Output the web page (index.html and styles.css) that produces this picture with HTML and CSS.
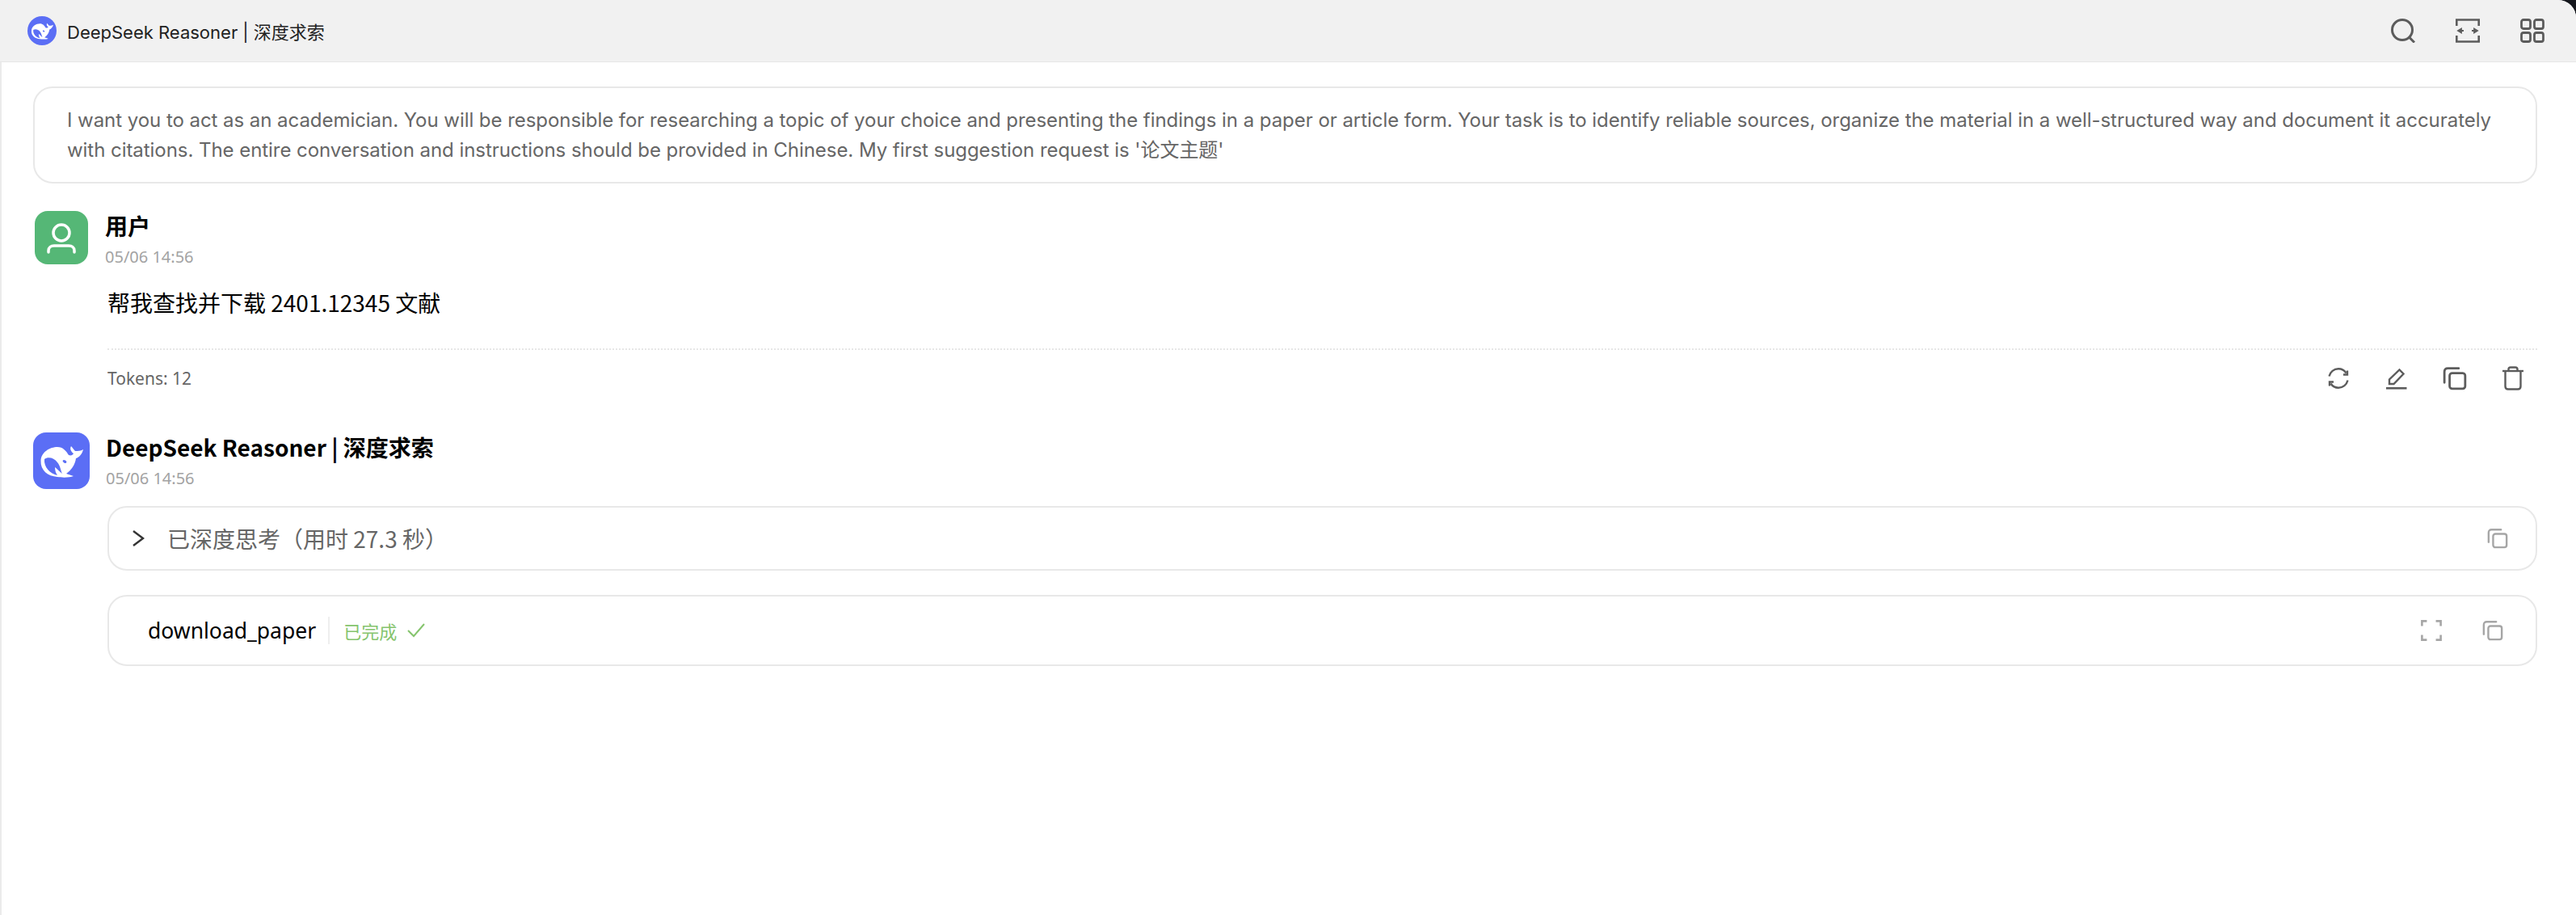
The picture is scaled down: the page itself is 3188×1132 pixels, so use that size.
FILE: index.html
```html
<!DOCTYPE html>
<html lang="zh">
<head>
<meta charset="utf-8">
<title>DeepSeek Reasoner</title>
<link rel="stylesheet" href="styles.css">
</head>
<body>
<svg class="defs" width="0" height="0" aria-hidden="true">
  <symbol id="whale" viewBox="0 0 70 70">
    <path fill="#fff" d="M9.500 35C10 24 21 18 30 18C37 18 41 23 44 28C47 29 49 28 50 26C47 24 45 20 47 17C49 19 50 21 52 23C55 23 59 23 62 21C61 26 57 31 53 32C52 40 47 47 41 51C44 52 47 53 50 54C45 56 36 56 30 55C18 54 9 47 9.500 35Z"/>
    <path fill="currentColor" d="M14 33C18 30 26 31 30 37C34 42 34 47 36 51C32 48 30 45 27 43C27 47 28 50 30 53C21 51 13 43 14 33Z"/>
    <ellipse fill="currentColor" cx="39" cy="36" rx="2.6" ry="1.600" transform="rotate(30 39 36)"/>
  </symbol>
  <symbol id="copy" viewBox="0 0 28 28">
    <path fill="none" stroke="currentColor" stroke-width="2.600" stroke-linecap="round" d="M18.500 2.500H6Q2 2.500 2 6.500V19"/>
    <rect x="8" y="8" width="18" height="18" rx="3" fill="none" stroke="currentColor" stroke-width="2.600"/>
  </symbol>
</svg>
<div class="window">
  <header class="titlebar">
    <div class="title-left">
      <svg class="logo-round"><use href="#whale"/></svg>
      <span class="title-text">DeepSeek Reasoner | 深度求索</span>
    </div>
    <div class="title-actions">
      <svg class="top-icon" viewBox="0 0 30 30" fill="none" stroke="currentColor" stroke-width="3"><circle cx="14" cy="14" r="12.500"/><path d="M22.500 23L29 29.500"/></svg>
      <svg class="top-icon" viewBox="0 0 30 30" fill="none" stroke="currentColor" stroke-width="2.600"><path d="M1.300 9V1.500H28.700V9M1.300 21V28.500H28.700V21"/><path d="M3 15H10M3 15L7 12.500V17.500ZM27 15H20M27 15L23 12.500V17.500Z" fill="currentColor" stroke-width="1.800"/></svg>
      <svg class="top-icon" viewBox="0 0 30 30" fill="none" stroke="currentColor" stroke-width="2.800"><rect x="1.500" y="1.500" width="11" height="11" rx="2.500"/><rect x="17.500" y="1.500" width="11" height="11" rx="2.500"/><rect x="1.500" y="17.500" width="11" height="11" rx="2.500"/><rect x="17.500" y="17.500" width="11" height="11" rx="2.500"/></svg>
    </div>
  </header>
  <main class="content">
    <div class="prompt">I want you to act as an academician. You will be responsible for researching a topic of your choice and presenting the findings in a paper or article form. Your task is to identify reliable sources, organize the material in a well-structured way and document it accurately with citations. The entire conversation and instructions should be provided in Chinese. My first suggestion request is '论文主题'</div>

    <section class="message user">
      <div class="msg-head">
        <div class="avatar avatar-user">
          <svg viewBox="0 0 66 66" fill="none" stroke="#fff" stroke-width="3.500" stroke-linecap="round"><circle cx="33" cy="27" r="10"/><path d="M17 51V49C17 45 20 43 24 43H42C46 43 49 45 49 49V51"/></svg>
        </div>
        <div class="who">
          <div class="name">用户</div>
          <div class="time">05/06 14:56</div>
        </div>
      </div>
      <div class="msg-body">
        <p class="msg-text">帮我查找并下载 2401.12345 文献</p>
        <div class="msg-foot">
          <span class="tokens">Tokens: 12</span>
          <div class="foot-actions">
            <svg class="foot-icon" viewBox="0 0 28 28" fill="none" stroke="currentColor" stroke-width="2.400"><path d="M2.500 11.500C3.700 6.200 8.400 2.300 14 2.300C18 2.300 21.500 4.300 23.500 7.500"/><path d="M25.500 16.500C24.300 21.800 19.600 25.700 14 25.700C10 25.700 6.500 23.700 4.500 20.500"/><path d="M25 4.500V9.500H20"/><path d="M3 23.500V18.500H8"/></svg>
            <svg class="foot-icon" viewBox="0 0 28 28" fill="none" stroke="currentColor" stroke-width="2.400"><path d="M5 21V15.500L17.500 3.500L22.500 8.500L10.500 21Z"/><path d="M1 26.300H26.500" stroke-width="2.600"/></svg>
            <svg class="foot-icon foot-copy"><use href="#copy"/></svg>
            <svg class="foot-icon foot-trash" viewBox="0 0 28 30" fill="none" stroke="currentColor" stroke-width="2.400"><path d="M1 6H27"/><path d="M8.500 6V4Q8.500 1.500 11 1.500H17Q19.500 1.500 19.500 4V6"/><path d="M4.500 6V25Q4.500 28.500 8 28.500H20Q23.500 28.500 23.500 25V6"/></svg>
          </div>
        </div>
      </div>
    </section>

    <section class="message assistant">
      <div class="msg-head">
        <svg class="avatar avatar-ds"><use href="#whale"/></svg>
        <div class="who">
          <div class="name">DeepSeek Reasoner | 深度求索</div>
          <div class="time">05/06 14:56</div>
        </div>
      </div>
      <div class="msg-body">
        <div class="card card-think">
          <svg class="chevron" viewBox="0 0 16 22" fill="none" stroke="currentColor" stroke-width="2.400"><path d="M2 2L14 11L2 20"/></svg>
          <span class="think-text">已深度思考（用时 27.3 秒）</span>
          <svg class="card-icon"><use href="#copy"/></svg>
        </div>
        <div class="card card-tool">
          <span class="tool-name">download_paper</span>
          <span class="tool-status">已完成</span>
          <svg class="check" viewBox="0 0 22 18" fill="none" stroke="currentColor" stroke-width="2"><path d="M1 9L8 16L21 1"/></svg>
          <svg class="card-icon expand" viewBox="0 0 28 28" fill="none" stroke="currentColor" stroke-width="2.800"><path d="M1.500 8V1.500H8M20 1.500H26.500V8M26.500 20V26.500H20M8 26.500H1.500V20"/></svg>
          <svg class="card-icon"><use href="#copy"/></svg>
        </div>
      </div>
    </section>
  </main>
</div>
</body>
</html>
```

FILE: styles.css
```css
* { box-sizing: border-box; }
html, body { margin: 0; height: 100%; background: #14161c; }
.defs { position: absolute; }
.window {
  height: 1132px;
  display: flex;
  flex-direction: column;
  background: #fff;
  border-top-right-radius: 22px;
  overflow: hidden;
  font-family: Inter, "Noto Sans CJK SC", sans-serif;
}
.titlebar {
  flex: none;
  height: 77px;
  display: flex;
  align-items: center;
  justify-content: space-between;
  padding: 0 39px 1px 34px;
  background: #f1f1f1;
  border-bottom: 1px solid #e6e6e6;
}
.title-left { display: flex; align-items: center; gap: 13px; }
.logo-round {
  width: 36px;
  height: 36px;
  border-radius: 50%;
  color: #5b6ef5;
  background: #5b6ef5;
}
.title-text { font-size: 22px; color: #222; }
.title-actions { display: flex; align-items: center; gap: 50px; }
.top-icon { width: 30px; height: 30px; color: #5c5c5c; }
.content {
  flex: 1;
  padding: 30px 48px 0 39px;
  border-left: 2px solid #ebebeb;
}
.prompt {
  height: 120px;
  padding: 21px 40px;
  border: 2px solid #e8e8e8;
  border-radius: 24px;
  font-size: 24px;
  line-height: 37px;
  letter-spacing: -0.05px;
  color: #666;
}
.message { margin-top: 34px; }
.assistant { margin-top: 32px; }
.msg-head { display: flex; align-items: flex-start; gap: 21px; }
.assistant .msg-head { gap: 20px; }
.avatar { flex: none; border-radius: 16px; display: block; }
.avatar-user { width: 66px; height: 66px; margin-left: 2px; background: #55b776; }
.avatar-user svg { display: block; width: 66px; height: 66px; }
.avatar-ds { width: 70px; height: 70px; color: #5b6ef5; background: #5b6ef5; }
.who { margin-top: -1px; }
.name {
  font-family: "Noto Sans CJK SC", sans-serif;
  font-size: 28px;
  line-height: 38px;
  font-weight: 600;
  color: #000;
}
.time {
  font-family: "Noto Sans", "Noto Sans CJK SC", sans-serif;
  font-size: 20px;
  line-height: 28px;
  margin-top: 6px;
  color: #a3a3a3;
}
.msg-body { margin-left: 92px; }
.msg-text {
  margin: 0;
  padding-top: 22px;
  font-family: "Noto Sans CJK SC", sans-serif;
  font-size: 28px;
  line-height: 40px;
  color: #000;
}
.msg-foot {
  display: flex;
  align-items: center;
  justify-content: space-between;
  height: 72px;
  margin-top: 37px;
  padding-right: 16px;
  border-top: 2px dotted #e6e6e6;
}
.tokens {
  font-family: "Noto Sans", sans-serif;
  font-size: 21px;
  color: #666;
}
.foot-actions { display: flex; align-items: center; gap: 44px; }
.foot-icon { width: 28px; height: 28px; color: #5c5c5c; }
.foot-copy { width: 30px; height: 30px; margin: -1px; }
.foot-trash { height: 30px; margin: -1px 0; }
.card {
  display: flex;
  align-items: center;
  border: 2px solid #e8e8e8;
  border-radius: 24px;
}
.card-think { height: 80px; margin-top: 20px; padding: 0 34px 0 28px; }
.card-tool { height: 88px; margin-top: 30px; padding: 0 40px 0 48px; }
.chevron { width: 16px; height: 22px; color: #333; }
.think-text {
  flex: 1;
  margin-left: 28px;
  font-family: "Noto Sans CJK SC", sans-serif;
  font-size: 28px;
  color: #666;
}
.card-icon { width: 26px; height: 26px; color: #a6a6a6; }
.tool-name {
  font-family: "Noto Sans", sans-serif;
  font-size: 26.500px;
  color: #000;
  padding-right: 15px;
}
.tool-status {
  padding-left: 17px;
  border-left: 2px solid #eee;
  font-family: "Noto Sans CJK SC", sans-serif;
  font-size: 22px;
  line-height: 34px;
  color: #85c46d;
}
.check { width: 22px; height: 18px; margin-left: 13px; margin-right: auto; color: #85c46d; }
.expand { margin-right: 50px; }
```
